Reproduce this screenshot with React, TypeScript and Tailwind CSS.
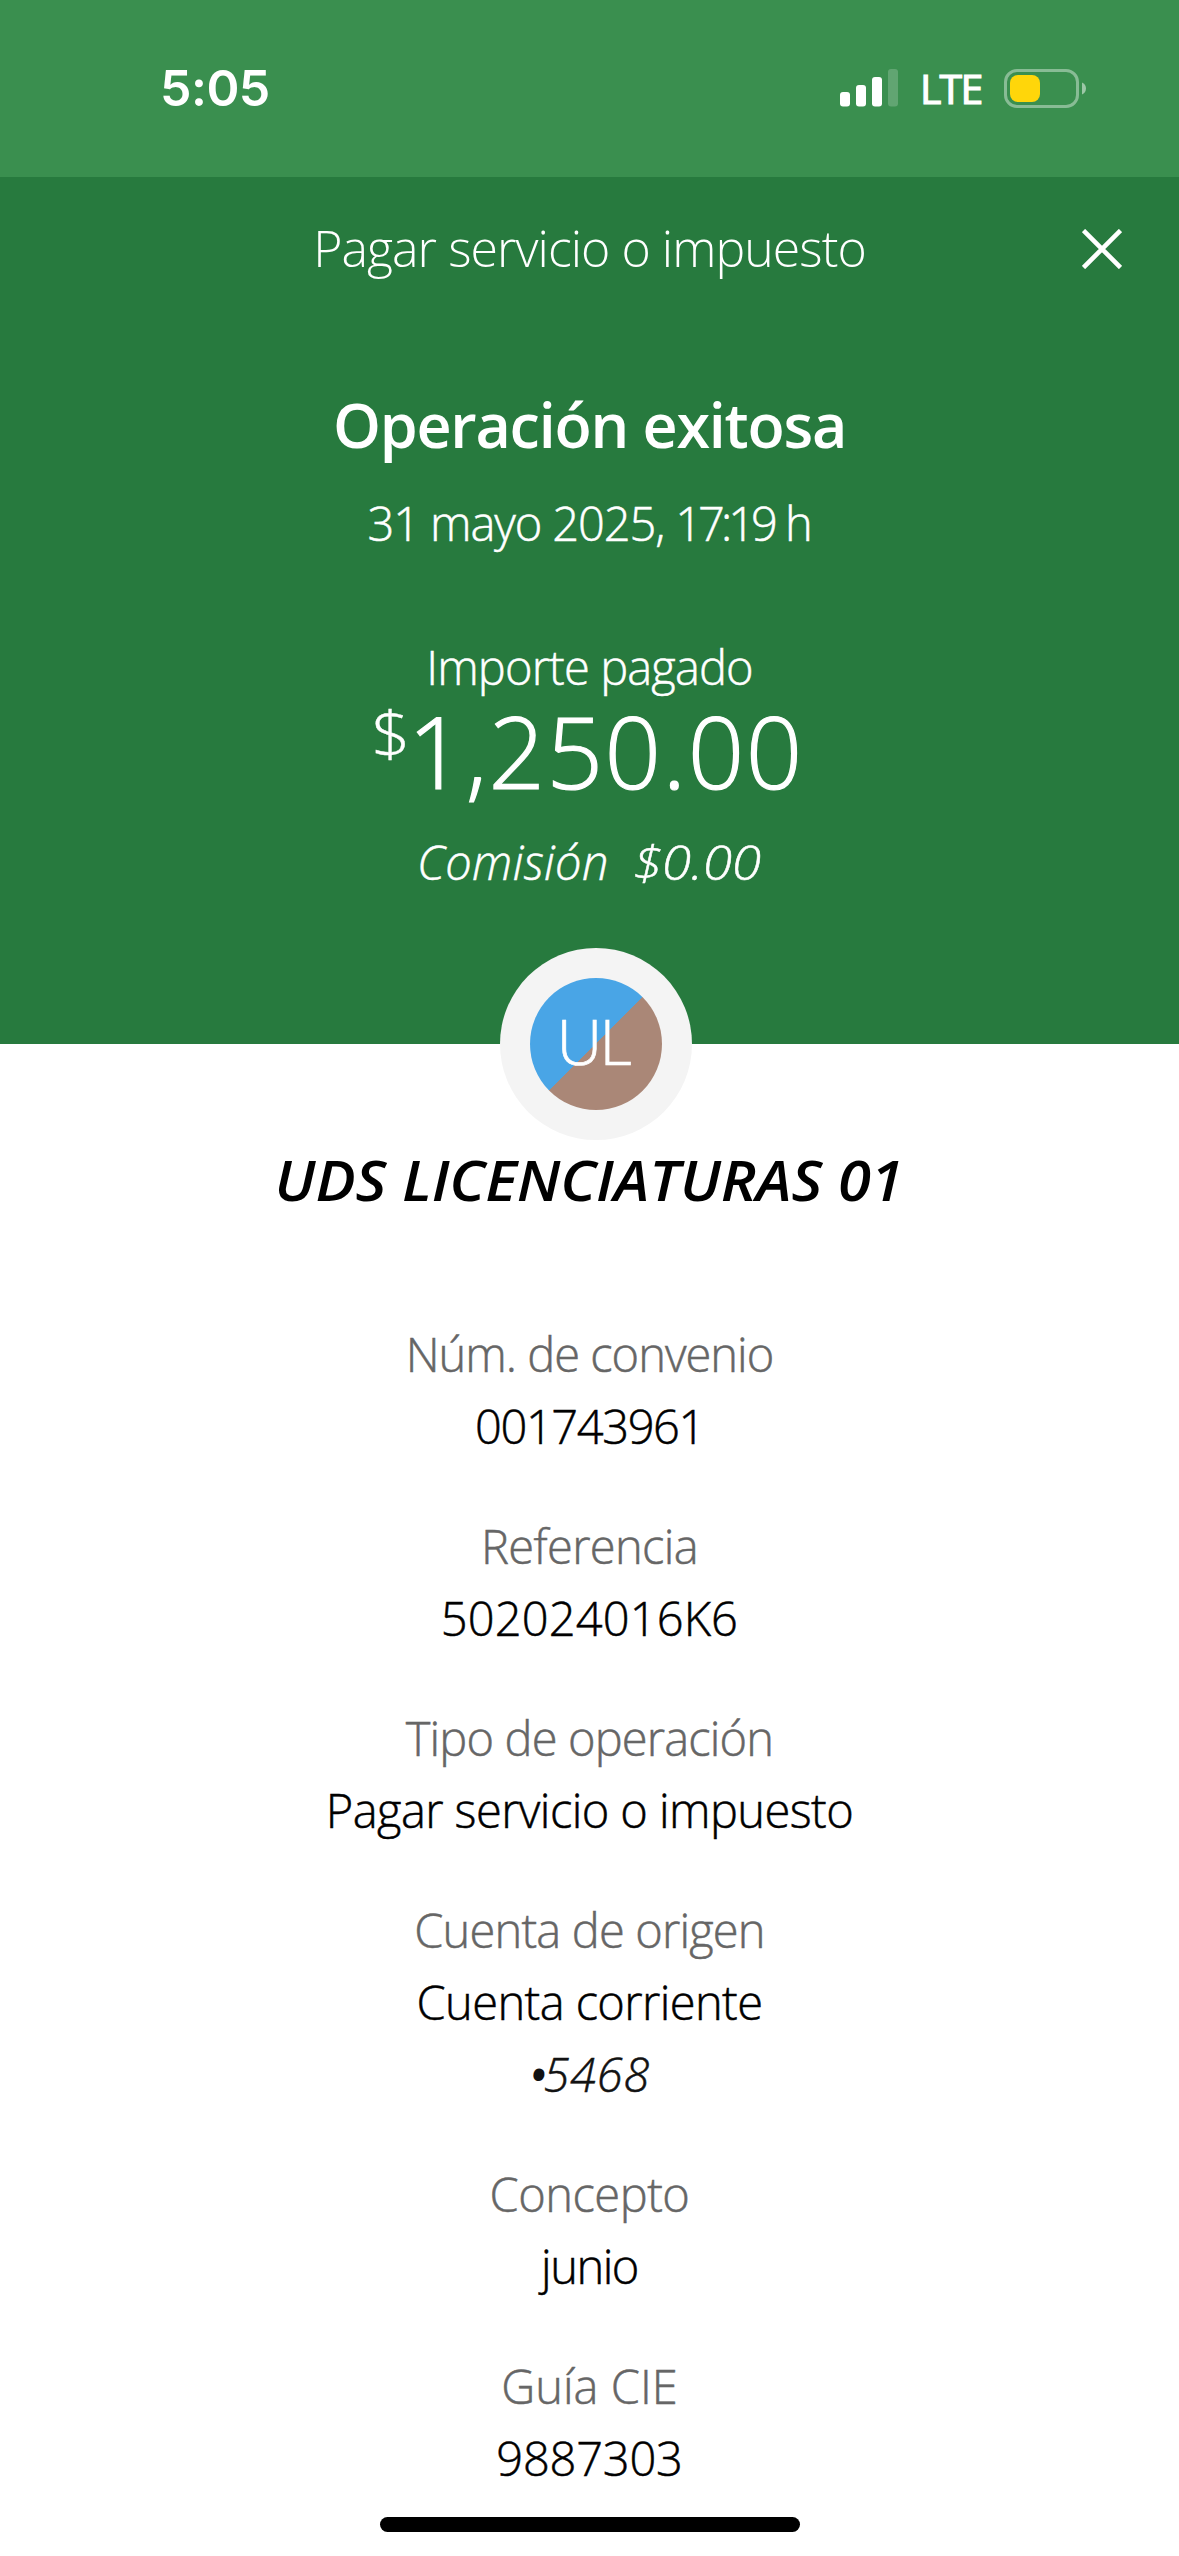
import React from 'react';

interface DetailLine {
  text: string;
  className: string;
  masked?: boolean;
}

interface Detail {
  label: string;
  labelClass: string;
  lines: DetailLine[];
}

const details: Detail[] = [
  {
    label: 'Núm. de convenio',
    labelClass: 'tracking-[-1px]',
    lines: [{ text: '001743961', className: 'text-black tracking-[-1.4px]' }],
  },
  {
    label: 'Referencia',
    labelClass: 'tracking-[-0.65px]',
    lines: [{ text: '502024016K6', className: 'text-black tracking-[0.15px]' }],
  },
  {
    label: 'Tipo de operación',
    labelClass: 'tracking-[-0.85px]',
    lines: [{ text: 'Pagar servicio o impuesto', className: 'text-black tracking-[-0.58px]' }],
  },
  {
    label: 'Cuenta de origen',
    labelClass: 'tracking-[-0.83px]',
    lines: [
      { text: 'Cuenta corriente', className: 'text-black tracking-[-0.6px]' },
      { text: '5468', className: 'text-[#121212] italic tracking-[0.8px]', masked: true },
    ],
  },
  {
    label: 'Concepto',
    labelClass: 'tracking-[-0.5px]',
    lines: [{ text: 'junio', className: 'text-black tracking-[-1.5px]' }],
  },
  {
    label: 'Guía CIE',
    labelClass: 'tracking-normal',
    lines: [{ text: '9887303', className: 'text-black tracking-[-0.2px]' }],
  },
];

const SignalIcon = () => (
  <svg width="58" height="38" viewBox="0 0 58 38" fill="white">
    <rect x="0" y="23" width="10" height="14.5" rx="3" />
    <rect x="16" y="16" width="10" height="21.5" rx="3" />
    <rect x="32" y="8" width="10" height="29.5" rx="3" />
    <rect x="48" y="0" width="10" height="37.5" rx="3" fillOpacity="0.2" />
  </svg>
);

const BatteryIcon = () => (
  <svg width="82" height="39" viewBox="0 0 82 39" fill="none">
    <rect x="1.5" y="1.5" width="72" height="36" rx="11.5" stroke="white" strokeOpacity="0.4" strokeWidth="3" />
    <rect x="6" y="6" width="30" height="27" rx="8" fill="#ffd60a" />
    <path d="M78 13.5c2.4 1 4 3.3 4 6s-1.6 5-4 6z" fill="white" fillOpacity="0.5" />
  </svg>
);

const StatusBar = () => (
  <div className="flex h-[177px] items-center justify-between bg-[#3a8f4f] pb-px pl-[160px] pr-[93px] text-white">
    <span className="font-['Inter',sans-serif] text-[50px] leading-none font-semibold tracking-[-0.5px]">5:05</span>
    <div className="flex items-center">
      <SignalIcon />
      <span className="ml-[22px] w-[84px] text-[41px] leading-none tracking-[-1.8px] [-webkit-text-stroke:1.2px_white]">LTE</span>
      <BatteryIcon />
    </div>
  </div>
);

const App: React.FC = () => {
  return (
    <div className="flex h-[2556px] w-[1179px] flex-col overflow-hidden bg-white font-['Open_Sans',sans-serif]">
      <StatusBar />

      <header className="h-[867px] bg-[#277a3e] text-center font-light text-white">
        <div className="grid h-[140px] grid-cols-[1fr_auto_1fr] items-center">
          <h1 className="col-start-2 mt-[2px] text-[50px] leading-none tracking-[-0.95px]">Pagar servicio o impuesto</h1>
          <button className="mt-1 mr-[57px] justify-self-end" aria-label="Cerrar">
            <svg width="40" height="40" viewBox="0 0 40 40" stroke="white" strokeWidth="4.6">
              <path d="M1.5 1.5l37 37M38.5 1.5l-37 37" />
            </svg>
          </button>
        </div>

        <h2 className="mt-[66px] text-[61px] leading-[84px] font-semibold tracking-[-1.24px]">Operación exitosa</h2>
        <p className="mt-5 text-[47px] leading-[72px] tracking-[-1.1px] [-webkit-text-stroke:0.5px]">
          31 mayo 2025, <span className="tracking-[-4px]">17:19</span> h
        </p>

        <p className="mt-[78px] text-[47px] leading-[60px] tracking-[-0.87px] [-webkit-text-stroke:0.5px]">Importe pagado</p>
        <div className="flex items-start justify-center">
          <span className="mt-[3px] -mr-[3px] origin-right scale-x-110 text-[62px] leading-[66px] [-webkit-text-stroke:0.4px]">$</span>
          <span className="text-[99px] leading-[108px] tracking-[1.5px] [-webkit-text-stroke:1.2px]">1,250.00</span>
        </div>
        <p className="mt-[21px] flex justify-center gap-[31px] pr-2 text-[47px] leading-[72px] italic [-webkit-text-stroke:0.5px]">
          <span className="tracking-[0.4px]">Comisión</span>
          <span className="scale-x-112 tracking-normal">$0.00</span>
        </p>
      </header>

      <main className="flex flex-col items-center font-light">
        <div className="-mt-24 ml-3 flex size-48 items-center justify-center rounded-full bg-[#f4f4f4]">
          <div className="flex size-[132px] items-center justify-center rounded-full bg-[linear-gradient(135deg,#49a5e6_50%,#aa8777_50%)] pr-[5px] pb-[8px]">
            <span className="text-[63px] leading-none tracking-[-2.5px] text-white [-webkit-text-stroke:0.7px]">UL</span>
          </div>
        </div>
        <h3 className="mt-px scale-x-[1.066] text-[56px] leading-[76px] font-semibold text-black italic">UDS LICENCIATURAS 01</h3>

        <div className="mt-[101px] flex flex-col gap-12 text-center text-[47px] leading-[72px] [-webkit-text-stroke:0.5px]">
          {details.map(detail => (
            <div key={detail.label}>
              <p className={`text-[#666666] ${detail.labelClass}`}>{detail.label}</p>
              {detail.lines.map(line => (
                <p key={line.text} className={line.className}>
                  {line.masked && <span className="mr-[-4px] [-webkit-text-stroke:4px]">•</span>}
                  {line.text}
                </p>
              ))}
            </div>
          ))}
        </div>

        <div className="mt-[23px] h-[15px] w-[420px] rounded-full bg-black" />
      </main>
    </div>
  );
};

export default App;
